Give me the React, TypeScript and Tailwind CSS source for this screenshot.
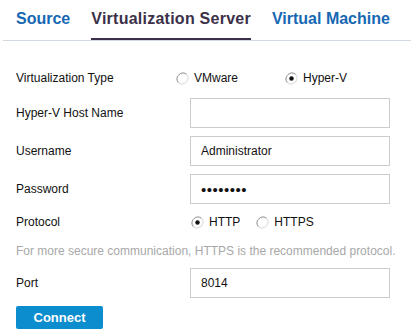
import { useState } from "react";

function Radio({ checked }: { checked: boolean }) {
  return (
    <svg width="13" height="13" viewBox="0 0 13 13" className="shrink-0">
      <circle cx="6.5" cy="6.5" r="6" fill="#f4f4f4" />
      <path d="M2.3 10.7 A6 6 0 0 1 10.7 2.3" fill="none" stroke="#8e8e8e" strokeWidth="1" />
      <path d="M10.7 2.3 A6 6 0 0 1 2.3 10.7" fill="none" stroke="#dcdcdc" strokeWidth="1" />
      <circle cx="6.5" cy="6.5" r="4.6" fill="#ffffff" />
      {checked && <circle cx="6.5" cy="6.5" r="2.2" fill="#111111" />}
    </svg>
  );
}

function RadioOption({
  label,
  checked,
  onClick,
  className,
}: {
  label: string;
  checked: boolean;
  onClick: () => void;
  className?: string;
}) {
  return (
    <button onClick={onClick} className={`flex items-center gap-[5px] ${className ?? ""}`}>
      <Radio checked={checked} />
      <span className="text-[12px] text-[#111]">{label}</span>
    </button>
  );
}

function Field({
  value,
  type = "text",
  className,
}: {
  value: string;
  type?: string;
  className?: string;
}) {
  return (
    <input
      type={type}
      defaultValue={value}
      className={`h-[30px] w-[200px] border border-[#cccccc] bg-white px-[10px] text-[#111] outline-none ${className ?? "text-[12px]"}`}
    />
  );
}

export default function App() {
  const [virtType, setVirtType] = useState("hyperv");
  const [protocol, setProtocol] = useState("http");

  return (
    <div className="h-[336px] w-[411px] bg-white font-['Liberation_Sans',Arial,sans-serif]">
      {/* Tabs */}
      <div className="ml-[3px] flex h-[41px] items-end border-b border-[#d3d9e0] pl-[13px]">
        <button className="pb-[9px] text-[16px] font-bold text-[#1768b3]">Source</button>
        <button className="ml-[21px] border-b-2 border-[#3b3048] pb-[7px] text-[16px] tracking-[0.25px] font-bold text-[#3b3048]">
          Virtualization Server
        </button>
        <button className="ml-[21px] pb-[9px] text-[16px] font-bold text-[#1768b3]">
          Virtual Machine
        </button>
      </div>

      <div className="pl-[16px] text-[12px] text-[#111]">
        <div className="mt-[25px] flex h-[24px] items-center">
          <span className="w-[160px]">Virtualization Type</span>
          <RadioOption
            label="VMware"
            checked={virtType === "vmware"}
            onClick={() => setVirtType("vmware")}
          />
          <RadioOption
            label="Hyper-V"
            className="ml-[47px]"
            checked={virtType === "hyperv"}
            onClick={() => setVirtType("hyperv")}
          />
        </div>

        <div className="mt-[8px] flex items-center">
          <span className="w-[174px]">Hyper-V Host Name</span>
          <Field value="" />
        </div>
        <div className="mt-[8px] flex items-center">
          <span className="w-[174px]">Username</span>
          <Field value="Administrator" />
        </div>
        <div className="mt-[8px] flex items-center">
          <span className="w-[174px]">Password</span>
          <Field value="adminpwd" type="password" className="text-[15px] tracking-[0.5px]" />
        </div>

        <div className="mt-[6px] flex h-[24px] items-center">
          <span className="w-[175px]">Protocol</span>
          <RadioOption
            label="HTTP"
            checked={protocol === "http"}
            onClick={() => setProtocol("http")}
          />
          <RadioOption
            label="HTTPS"
            className="ml-[16px]"
            checked={protocol === "https"}
            onClick={() => setProtocol("https")}
          />
        </div>

        <p className="mt-[9px] h-[16px] whitespace-nowrap leading-[16px] text-[12px] text-[#a8a8a8]">
          For more secure communication, HTTPS is the recommended protocol.
        </p>

        <div className="mt-[9px] flex items-center">
          <span className="w-[174px]">Port</span>
          <Field value="8014" />
        </div>

        <button className="mt-[8px] h-[23px] w-[87px] rounded-[2px] bg-[#0b8dce] text-[13px] font-bold text-white">
          Connect
        </button>
      </div>
    </div>
  );
}
